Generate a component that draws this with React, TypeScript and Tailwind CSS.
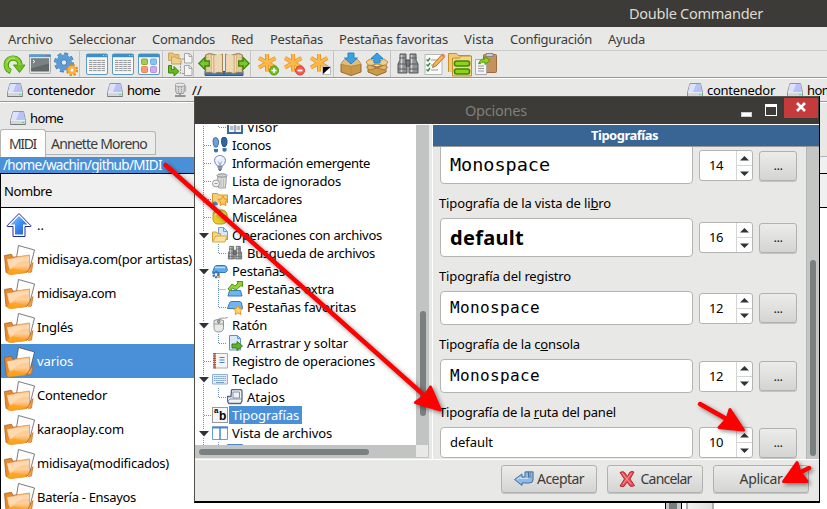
import React, { useLayoutEffect, useRef } from "react";

type Kids = { children?: React.ReactNode };

/* Text run whose tracking is measured so that it fills `w` pixels. */
function T({ w, className = "", children }: Kids & { w: number; className?: string }) {
  const ref = useRef<HTMLSpanElement>(null);
  useLayoutEffect(() => {
    const el = ref.current;
    if (!el) return;
    el.style.letterSpacing = "0px";
    const n = (el.textContent || "").length;
    el.style.letterSpacing = (w - el.getBoundingClientRect().width) / n + "px";
  }, [w]);
  return (
    <span ref={ref} className={"inline-block shrink-0 whitespace-pre " + className}>
      {children}
    </span>
  );
}

function Svg({ s = 24, vb = 24, className = "", children }: Kids & { s?: number; vb?: number; className?: string }) {
  return (
    <svg width={s} height={s} viewBox={`0 0 ${vb} ${vb}`} className={"shrink-0 " + className} fill="none">
      {children}
    </svg>
  );
}

/* ---------- toolbar icons ---------- */
const Refresh = () => (
  <Svg>
    <path d="M8.800 19.500A6.900 6.900 0 1 1 18 12.500" stroke="#4e9a06" strokeWidth="5.400" />
    <path d="M11.500 13h11.500L17.500 20.500z" fill="#73c022" stroke="#4e9a06" strokeLinejoin="round" />
    <path d="M8.300 19.200A6.900 6.900 0 1 1 17.800 13.500" stroke="#86cf35" strokeWidth="3.600" />
    <path d="M5 10.500a6.900 6.900 0 0 1 8-4" stroke="#b5e878" strokeWidth="1.200" />
  </Svg>
);
const Terminal = () => (
  <Svg>
    <rect x="1.5" y="2.5" width="21" height="19" rx="1" fill="#e4e6e5" stroke="#a9adab" />
    <path d="M1 2.500h22v2.500H1z" fill="#4e9fd8" />
    <path d="M18 3.700h1M20.500 3.700h1" stroke="#e33" strokeWidth="1.400" />
    <rect x="3" y="6.500" width="18" height="13" fill="#62676a" />
    <path d="M3 6.500h18v5l-18 5z" fill="#7b8083" />
    <path d="M5 8l1.800 1.500L5 11" stroke="#fff" />
  </Svg>
);
const Gears = () => (
  <Svg>
    <circle cx="10" cy="10.500" r="8.200" stroke="#3b7cb8" strokeWidth="3.600" strokeDasharray="3.7 2.74" />
    <circle cx="10" cy="10.500" r="5.300" stroke="#5c9bd6" strokeWidth="5.400" />
    <circle cx="10" cy="10.500" r="8" stroke="#5c9bd6" strokeWidth="2.600" strokeDasharray="3.2 3.08" />
    <circle cx="10" cy="10.500" r="2.800" fill="#e8e8e7" stroke="#3b7cb8" />
    <circle cx="18" cy="18" r="4.800" stroke="#d98518" strokeWidth="2.600" strokeDasharray="2.1 1.67" />
    <circle cx="18" cy="18" r="3" stroke="#fbb03b" strokeWidth="3.200" />
    <circle cx="18" cy="18" r="1.500" fill="#fff" />
  </Svg>
);
const Grid = () => (
  <Svg>
    <rect x="1.500" y="2" width="21" height="20.500" rx="1.500" fill="#f7f7f7" stroke="#5a9bc8" />
    <path d="M1.500 2h21v3.200h-21z" fill="#3d8fc8" />
    <path d="M18 3.600h1M20.500 3.600h1" stroke="#b9e0fa" />
    <rect x="4" y="7" width="16" height="13" fill="#eef0f1" />
    <path d="M4 8.500h16M4 10.500h16M4 12.500h16M4 14.500h16M4 16.500h16M4 18.500h16" stroke="#9a9ea1" strokeDasharray="3.400 .8" />
  </Svg>
);
const Thumbs = () => (
  <Svg>
    <rect x="1.500" y="2" width="21" height="20.500" rx="1.500" fill="#f7f7f7" stroke="#5a9bc8" />
    <path d="M1.500 2h21v3.200h-21z" fill="#3d8fc8" />
    <rect x="4.500" y="7" width="6" height="5.500" rx="1" fill="#a7c957" stroke="#84a830" />
    <rect x="13.500" y="7" width="6" height="5.500" rx="1" fill="#83c6f2" stroke="#69afe0" />
    <rect x="4.500" y="14.500" width="6" height="6" rx="1" fill="#f79a72" stroke="#e88458" />
    <rect x="13.500" y="14.500" width="6" height="6" rx="1" fill="#cfaaf0" stroke="#b793dd" />
  </Svg>
);
const FlatView = () => (
  <Svg s={26} vb={26}>
    <path d="M1.500 2h4.500l1 1.500h5V9.500H1.500z" fill="#e6c47c" stroke="#c9a65c" />
    <path d="M4.500 6h4.500l1 1.500h4V13H4.500z" fill="#ecd08e" stroke="#c9a65c" />
    <path d="M17 8h-3M13.500 12v10.500h3.500" stroke="#999" strokeDasharray="2 1" />
    <path d="M17.500 2.500h5l2.500 2.500v7h-7.500zM17.500 14.500h5l2.500 2.500v7.500h-7.500z" fill="#f5f5f5" stroke="#a5a5a5" />
    <path d="M22 2.500v3h3M22 14.500v3h3" stroke="#a5a5a5" />
    <path d="M1.500 14.500h3v4h2.500v-3l5 5-5 4.500v-3H1.500z" fill="#66b81e" stroke="#3d8a0a" />
  </Svg>
);
const BookLeft = () => (
  <Svg s={26} vb={26}>
    <path d="M7 20v4.500h19v-4z" fill="#3b78b5" stroke="#285d91" />
    <path d="M7.500 4Q11 1 16 3.500T24.500 3v19q-4-2-8 .5-4-2.500-9-1z" fill="#d9b98a" stroke="#a78352" />
    <path d="M10 4v17M12 4v17M14.500 4.500v17" stroke="#f0dcb6" />
    <path d="M16.500 4.500Q20 2.500 24 3.500V21q-4-1-7.500 1z" fill="#ecd8b4" />
    <path d="M.8 12.500l6-6v3.500h4.500v5H6.800v3.500z" fill="#79c52c" stroke="#3d8a0a" strokeWidth="1.300" />
  </Svg>
);
const BookRight = () => <div className="-scale-x-100"><BookLeft /></div>;
const star = "M11 2v17.500M3 6l16.500 9.500M3 15.500L19.500 6";
const StarBase = ({ children }: Kids) => (
  <Svg>
    <path d={star} stroke="#e58e1a" strokeWidth="4" strokeLinecap="butt" />
    <path d={star} stroke="#fdb74a" strokeWidth="2.600" strokeLinecap="butt" />
    {children}
  </Svg>
);
const StarPlus = () => (
  <StarBase>
    <circle cx="18" cy="18.500" r="4.500" fill="#73c022" stroke="#4e9a06" />
    <path d="M15.500 18.500h5M18 16v5" stroke="#fff" strokeWidth="1.500" />
  </StarBase>
);
const StarMinus = () => (
  <StarBase>
    <circle cx="18" cy="18.500" r="4.500" fill="#ee6052" stroke="#d33a2c" />
    <path d="M15.500 18.500h5" stroke="#fff" strokeWidth="1.800" />
  </StarBase>
);
const StarInvert = () => (
  <StarBase>
    <path d="M14.500 14.500h8v8h-8z" fill="#fff" stroke="#bbb" />
    <path d="M15 15h7.500L15 22z" fill="#000" />
  </StarBase>
);
const Pack = () => (
  <Svg>
    <path d="M2 12l3-4h14l3 4v8l-10 3.500-10-3.500z" fill="#c9994a" stroke="#99692a" />
    <path d="M2 12l10 2 10-2-3-4H5z" fill="#e2bd79" />
    <path d="M2.500 12.500l9.500 2 9.500-2M12 14.500v9" stroke="#b98b3e" />
    <path d="M9 1h6v5h3.500L12 12 5.500 6H9z" fill="#3ea1df" stroke="#2784c6" />
  </Svg>
);
const Unpack = () => (
  <Svg>
    <path d="M3 12l9 3 9-3v8l-9 3.500L3 20z" fill="#cb9b4b" stroke="#99692a" />
    <path d="M1 10l4-3 7 3 7-3 4 3-3 4-8-2-8 2z" fill="#ecce91" stroke="#b98b3e" />
    <path d="M1.500 15l3-2 7.500 3 7.500-3 3 2-3 3-7.500-2-7.500 2z" fill="#e0b568" stroke="#a97a33" />
    <path d="M12 1l6 5.500h-3V11H9V6.500H6z" fill="#3ea1df" stroke="#2784c6" />
  </Svg>
);
const Binoculars = ({ s = 24 }: { s?: number }) => (
  <Svg s={s}>
    <path d="M4 2h6v7l1 2v10H2v-9l2-4zM14 2h6v6l2 4v9h-9V11l1-2z" fill="#8f9294" stroke="#55585a" />
    <path d="M10 8h4v6h-4z" fill="#77797b" stroke="#4a4c4e" />
    <path d="M5.500 3v17M15.500 3v17" stroke="#d2d4d5" strokeWidth="1.600" />
    <path d="M3 6h7M14 6h7M2 12h9M13 12h9M2 17h9M13 17h9" stroke="#5a5c5e" />
  </Svg>
);
const Checklist = () => (
  <Svg>
    <path d="M3 2.500h17v20H3z" fill="#fafafa" stroke="#b8b8b8" />
    <path d="M9 8h7M9 13h6M9 18h7" stroke="#bbb" strokeWidth="1.500" />
    <path d="M4.500 7.500l1.500 1.500 2-3M4.500 12.500L6 14l2-3M4.500 17.500L6 19l2-3" stroke="#2f8f3a" strokeWidth="1.400" />
    <path d="M10.500 15.500l1-3.500L20 2.500l2.500 2.500-8.500 9z" fill="#f8b552" stroke="#b8742c" />
    <path d="M19.500 3L21 1.500 23.500 4 22 5.500z" fill="#e77" />
  </Svg>
);
const SyncFolder = () => (
  <Svg s={26} vb={26}>
    <path d="M1.500 21V2.500h8l1.500 2h12V20" fill="#f3cb74" stroke="#c58f2a" />
    <path d="M5.500 25V7h7l1.500-2h10.500v20z" fill="#f6d48b" stroke="#c58f2a" />
    <rect x="7.500" y="10" width="15" height="5" rx="2" fill="#8ed21c" stroke="#3d8a0a" strokeWidth="1.600" />
    <rect x="7.500" y="18" width="15" height="5" rx="2" fill="#8ed21c" stroke="#3d8a0a" strokeWidth="1.600" />
  </Svg>
);
const Paste = () => (
  <Svg>
    <rect x="9.500" y="2.500" width="13" height="18" rx="1" fill="#c4935d" stroke="#9a6c3a" />
    <path d="M12 1.500h7v3h-7z" fill="#ccc" stroke="#888" />
    <path d="M1.500 7.500h11v15h-11z" fill="#f4f4f4" stroke="#aaa" />
    <path d="M4 11.500h3M4 14h6M4 16.500h6M4 19h6" stroke="#999" />
    <path d="M5 12q0-5 6-5V4.500l5 4-5 4V10Q7 9.500 5 12z" fill="#8ed21c" stroke="#4e9a06" />
  </Svg>
);

/* ---------- drives, folders ---------- */
const Drive = () => (
  <Svg s={16} vb={16}>
    <path d="M3 1.500h10.500l2 9v4H.5v-4z" fill="#e9ebf2" stroke="#92949c" />
    <path d="M3 2h10.300l1.700 8H1.200z" fill="#b9c2f5" />
    <path d="M3.200 2h6L6 10H1.200z" fill="#dde2fc" />
    <path d="M1 11h14v3H1z" fill="#d5d6d8" />
    <path d="M12 12.500h2" stroke="#4d8" />
    <path d="M.5 14.500h15" stroke="#77797d" />
  </Svg>
);
const NetDrive = () => (
  <Svg s={16} vb={16}>
    <path d="M2.500 2.500h9v3q0 4-1 6h-7q-1-2-1-6z" fill="#d4d5d6" stroke="#9b9d9f" />
    <ellipse cx="7" cy="2.800" rx="5" ry="1.600" fill="#eee" stroke="#a5a5a5" />
    <path d="M5.500 4.500v6M8.500 4.500v6" stroke="#9a9c9e" strokeDasharray="1.500 .8" />
    <path d="M7 11v3M2 14h10.500" stroke="#909294" strokeWidth="1.800" />
    <path d="M12.500 3.500v6" stroke="#b5b5b5" strokeWidth="1.500" />
  </Svg>
);
const UpArrow = () => (
  <Svg s={26} vb={26}>
    <path d="M13 1.500L25 13.800q.3.700-.5.700H19V24.500H7V14.500H1.500q-.8 0-.5-.7z" fill="#fff" stroke="#242a9c" strokeLinejoin="round" />
    <path d="M13 4L21.500 12.500H17V22.500H9V12.500H4.500z" fill="url(#upg)" />
    <defs>
      <linearGradient id="upg" x1="0" y1="0" x2="1" y2="1">
        <stop stopColor="#8fd0fb" /><stop offset=".5" stopColor="#3d8df0" /><stop offset="1" stopColor="#1f56c9" />
      </linearGradient>
    </defs>
  </Svg>
);
const Folder = () => (
  <Svg s={32} vb={32}>
    <defs>
      <linearGradient id="fg" x1="0" y1="0" x2="0" y2="1">
        <stop stopColor="#fbc48a" /><stop offset=".55" stopColor="#fdcf9b" /><stop offset="1" stopColor="#f98f12" />
      </linearGradient>
    </defs>
    <path d="M1.500 12.500l7-1.200 1.500 3 15-2 2 8-3 9-16 2-5-2z" fill="#e98a2c" stroke="#a8560f" strokeWidth=".7" />
    <path d="M15.500 2.500l16 4.500-5 20-14.500-3.500z" fill="#fff" stroke="#444" strokeWidth=".7" />
    <path d="M3.500 15.800L11 14.800l1.500-.8 14-2 .2 13.500-2 3-18 2.500z" fill="url(#fg)" stroke="#d07a22" strokeWidth=".6" />
    <path d="M4.500 16.500l21.500-3v4q-13 0-18.500 10z" fill="#ffe3c4" opacity=".6" />
    <path d="M24.500 28.500l5.500-9-1.500 9.500-3 .5z" fill="#f9a13e" stroke="#b85e10" strokeWidth=".6" />
    <path d="M4 30.500q1-5.500 7-5t13 3.500l-3 1.500-15 1.500z" fill="#ffa51b" opacity=".85" />
  </Svg>
);

/* ---------- option tree icons ---------- */
const I = ({ children }: Kids) => <Svg s={16} vb={16}>{children}</Svg>;
const icons: Record<string, React.ReactNode> = {
  visor: <I><path d="M0 2h16v13H0z" fill="#35689f" /><path d="M2 3h5.500v10H2zM8.500 3H14v10H8.500z" fill="#f2f2f2" /><path d="M3 8h3.500M3 10h3.500M9.500 8H13M9.500 10H13" stroke="#888" /></I>,
  feet: <I><path d="M1 4Q1 .5 3.500.5T6.500 4 5 10H2.500Q1 7 1 4z" fill="#6f9fd4" stroke="#3f72b0" /><path d="M9.500 3.500Q9.500 0 12 0t3 3.500-1.500 6H11q-1.500-2-1.500-6z" fill="#3264a8" stroke="#234d88" /><path d="M2 12h4v2.500q-2 2-4 0zM10.500 11h4v3q-2 1.500-4 0z" fill="#3c70b4" /></I>,
  bulb: <I><path d="M5.500 11Q2.500 8.500 2.500 5.500a5.500 5 0 0 1 11 0Q13.500 8.500 10.500 11z" fill="#e9f0ff" stroke="#7885a8" /><path d="M5 4q1.500-2.500 4-1.500" stroke="#fff" strokeWidth="2" /><path d="M6.500 6.500l1.500 4 1.500-4" stroke="#9ab" /><path d="M5.500 12h5M6 14h4M7 15.500h2" stroke="#67748d" strokeWidth="1.300" /></I>,
  trash: <I><path d="M5.500 3h9l-1 12h-7z" fill="#d9dad9" stroke="#a0a3a2" /><ellipse cx="10" cy="2.500" rx="5" ry="1.700" fill="#cfd1d0" stroke="#8a8d8b" /><circle cx="4" cy="10.500" r="3.500" fill="#eee" stroke="#999" /><path d="M2.500 10.500h3" stroke="#999" /><path d="M9 6v8M11.500 6v8" stroke="#bbb" /></I>,
  marks: <I><path d="M.5 13V2.500h5l1 1.500h9v8" fill="#f8d07a" stroke="#d09a30" /><path d="M11 5l1.500 3 3 .5-2 2.500.5 3.500-3-1.500-3 1.500.5-3.500L6 8.500 9.500 8z" fill="#ffc659" stroke="#e28f28" /><path d="M1 11q4-2 5 3l-5 1z" fill="#4a87c6" /></I>,
  misc: <I><rect x="1" y="1" width="14" height="14" rx="5" fill="#e8ce2d" stroke="#b59d15" /><path d="M3 6q5-5 10 0" stroke="#fff3a5" strokeWidth="2" /></I>,
  ops: <I><path d="M6.500.5h5l4 4v8h-9z" fill="#d8e7fa" stroke="#6d9dd8" /><path d="M11.500.5v4h4" stroke="#6d9dd8" /><path d="M.5 14V5h4l1 1.500h3V10" fill="#f7d583" stroke="#cf9c34" /><path d="M.5 15l3-6H15l-2 6z" fill="#fce2a0" stroke="#d9a63f" /></I>,
  binoc: <Binoculars s={16} />,
  tabs: <I><path d="M.5 9.500L2.500 4Q3 2.500 5 2.500h7q2 0 2.500 1.500l1 3.500-2 2z" fill="#62a9e8" stroke="#3678bb" /><path d="M3 4.500h10" stroke="#b5dcfa" strokeWidth="1.500" /><circle cx="4" cy="11.500" r="2.500" stroke="#3a75b5" strokeWidth="2.500" strokeDasharray="2 .7" /><circle cx="7" cy="14" r="1.300" fill="#f0a030" /></I>,
  extra: <I><path d="M1 15l1.500-5.500h11L15 15z" fill="#72b5ee" stroke="#3678bb" /><path d="M1 8l4-5 3 2 3-3-1-1.500h5.500V5.500L14 4.500 9 9 5.500 7 3 10z" fill="#94d13d" stroke="#4e9a06" /></I>,
  fav: <I><path d="M.5 9.500L2.500 4Q3 2.500 5 2.500h7q2 0 2.500 1.500l1 5.500z" fill="#72b5ee" stroke="#3678bb" /><path d="M11 6.500l1.400 3 3.100.5-2.200 2.200.6 3.300-2.900-1.500-2.900 1.500.6-3.300L6.500 10l3-.5z" fill="#ffd66b" stroke="#e69a28" /></I>,
  mouse: <I><path d="M2 3.500Q6.500 1 11.500 3.500v7q0 4.500-4.800 4.500T2 10.500z" fill="#e9e9e8" stroke="#8f9291" /><path d="M2.500 7h8.500M6.700 3v4" stroke="#999" /><path d="M6.700 4q0-3.500 3-3t6-.5" stroke="#999" /><circle cx="6.700" cy="4.500" r="1.300" fill="#bbb" stroke="#777" /></I>,
  drag: <I><path d="M2.500.5h8l3 3v11.500h-11z" fill="#d7e9fb" stroke="#5e93ce" /><path d="M10.500.5v3h3" stroke="#5e93ce" /><path d="M5 9h5V6.500l5.500 4.500-5.500 4.500V13H5z" fill="#62b12b" stroke="#3a7d12" /></I>,
  log: <I><path d="M2.500.5h13v14.500h-13z" fill="#f5f5f5" stroke="#aaa" /><path d="M2.500 0v16" stroke="#a55a3e" strokeWidth="3" strokeDasharray="1.500 .7" /><path d="M7.500 4.500h5M7.500 7h5M7.500 9.500h5" stroke="#4a84c8" strokeWidth="1.200" /></I>,
  keyb: <I><path d="M.5 3.500h15v9.500H.5z" fill="#e4eefa" stroke="#8db0d8" /><path d="M2 5.500h12M2 7.500h12M2 9.500h12" stroke="#79a0cc" strokeDasharray="1.500 .6" /><path d="M4 11.500h8" stroke="#79a0cc" /></I>,
  keys: <I><path d="M4.500 1.500Q4.500.5 6 .5h7q2 0 2 2V12l-1.500 2.500H2l-1.500-2V7.500H4z" fill="#f0f1f3" stroke="#54658a" strokeWidth="1.300" /><path d="M6 3h6.500v6H6zM.5 12.500L3 10h12" stroke="#8492ad" /></I>,
  fonts: <div className="relative h-4 w-4 shrink-0 border border-[#999] bg-[#f6f6f6] font-['Liberation_Sans',sans-serif] font-bold text-black"><span className="absolute left-px top-[-2px] text-[8px] leading-[10px]">a</span><span className="absolute left-[6px] top-[2px] text-[12px] leading-[13px]">b</span></div>,
  view: <I><path d="M.5 2h15v12.500H.5z" fill="#fff" stroke="#6d9dd8" /><path d="M0 2.500h16" stroke="#4a86cc" strokeWidth="2" /><path d="M8 2v12.500" stroke="#4a86cc" strokeWidth="1.500" /></I>,
  next: <I><path d="M.5 1.500h15v12.500H.5z" fill="#c8dcf2" stroke="#4a86cc" /></I>,
};

type Node = { t: string; w: number; i: string; sub?: boolean; open?: boolean; sel?: boolean };
const nodes: Node[] = [
  { t: "Visor", w: 31, i: "visor", sub: true },
  { t: "Iconos", w: 39, i: "feet" },
  { t: "Información emergente", w: 138, i: "bulb" },
  { t: "Lista de ignorados", w: 109, i: "trash" },
  { t: "Marcadores", w: 70, i: "marks" },
  { t: "Miscelánea", w: 65, i: "misc" },
  { t: "Operaciones con archivos", w: 150, i: "ops", open: true },
  { t: "Búsqueda de archivos", w: 128, i: "binoc", sub: true },
  { t: "Pestañas", w: 53, i: "tabs", open: true },
  { t: "Pestañas extra", w: 87, i: "extra", sub: true },
  { t: "Pestañas favoritas", w: 109, i: "fav", sub: true },
  { t: "Ratón", w: 35, i: "mouse", open: true },
  { t: "Arrastrar y soltar", w: 101, i: "drag", sub: true },
  { t: "Registro de operaciones", w: 143, i: "log" },
  { t: "Teclado", w: 46, i: "keyb", open: true },
  { t: "Atajos", w: 38, i: "keys", sub: true },
  { t: "Tipografías", w: 67, i: "fonts", sel: true },
  { t: "Vista de archivos", w: 100, i: "view", open: true },
  { t: "", w: 0, i: "next", sub: true },
];

function TreeRow({ n }: { n: Node }) {
  return (
    <div className="flex h-[18px] shrink-0 items-center">
      <div className="flex h-full w-[17px] shrink-0 items-center justify-end">
        {n.open ? (
          <svg width="17" height="18"><path d="M8.500 0v5M8.500 14v4" stroke="#6d8fb8" strokeDasharray="1 1" /><path d="M4 7h10l-5 5.500z" fill="#2e3436" /></svg>
        ) : (
          <svg width="17" height="18"><path d="M8.500 0v18" stroke="#6d8fb8" strokeDasharray="1 1" />{!n.sub && <path d="M9 9.500h7" stroke="#6d8fb8" strokeDasharray="1 1" />}</svg>
        )}
      </div>
      {n.sub && (
        <svg width="15" height="18" className="shrink-0"><path d={n.i === "extra" ? "M6.500 0v18M6.500 9.500h8" : "M6.500 0v9.500h8"} stroke="#6d8fb8" strokeDasharray="1 1" fill="none" /></svg>
      )}
      {icons[n.i]}
      <div className={"ml-px flex h-[18px] items-center px-[3px] " + (n.sel ? "bg-[#4a90d9] text-white" : "")}>
        {n.t && <T w={n.w}>{n.t}</T>}
      </div>
    </div>
  );
}

const Spin = ({ v }: { v: string }) => (
  <div className="flex h-[31px] w-[54px] shrink-0 rounded-[3px] border border-[#b4b5b3] bg-white">
    <div className="flex flex-1 items-center pb-px pl-[9px]"><T w={14}>{v}</T></div>
    <div className="flex w-[16px] flex-col border-l border-[#d5d5d3]">
      <div className="flex flex-1 items-center justify-center border-b border-[#d5d5d3]"><svg width="9" height="5"><path d="M0 4.500L4.500 0 9 4.500z" fill="#2e3436" /></svg></div>
      <div className="flex flex-1 items-center justify-center"><svg width="9" height="5"><path d="M0 .5h9L4.500 5z" fill="#2e3436" /></svg></div>
    </div>
  </div>
);

const btn = "flex items-center justify-center rounded-[3px] border border-[#b1b2b0] bg-linear-to-b from-[#ececeb] to-[#d4d4d2] shadow-[0_1px_0_#c4c4c2]";

function FontRow({ v, children, h }: Kids & { v: string; h: string }) {
  return (
    <div className={"flex shrink-0 items-center " + h}>
      <div className={"flex w-[253px] shrink-0 items-center rounded-[4px] border border-[#b4b5b3] bg-white pl-[9px] " + h}>{children}</div>
      <div className="ml-[6px]"><Spin v={v} /></div>
      <div className={btn + " ml-[6px] h-[30px] w-[38px]"}><T w={9} className="pb-px text-[#222]">...</T></div>
    </div>
  );
}

const FieldLabel = ({ w, h, children }: Kids & { w: number; h: string }) => (
  <div className={"-ml-px flex shrink-0 items-center pt-[4px] " + h}><T w={w}>{children}</T></div>
);

const mono = "font-['DejaVu_Sans_Mono',monospace]";

function OptionsDialog() {
  return (
    <div className="absolute left-[194px] top-[96px] flex h-[407px] w-[626px] flex-col border-r border-b-2 border-l border-black border-l-[#4f5049] bg-[#e8e8e7]">
      <div className="flex h-[28px] shrink-0 items-start border-t border-[#55564f] bg-[#3c3b37]">
        <div className="flex flex-1 pl-[270px] pt-[2px] text-[14.500px] leading-[22px] text-[#807f7a]"><T w={62}>Opciones</T></div>
        <div className="mr-[13px] mt-[15px] h-[5px] w-[11px] border border-[#ccc] bg-white" />
        <div className="mr-[7px] mt-[7px] h-[12px] w-[12px] border border-t-[3px] border-white bg-[#3c3b37]" />
        <div className="mt-[1px] mr-px flex h-[20px] w-[34px] items-center justify-center bg-[#c33c3b]">
          <svg width="10" height="10" className="mb-[2px]"><path d="M1 1l8 8M9 1l-8 8" stroke="#fff" strokeWidth="2.600" /></svg>
        </div>
      </div>
      <div className="flex h-[335px] shrink-0 border-t border-white">
        <div className="flex w-[234px] flex-col">
          <div className="flex h-[320px]">
            <div className="flex w-[221px] flex-col overflow-hidden bg-white">
              <div className="-mt-[7px] flex flex-col">{nodes.map((n, k) => <TreeRow key={k} n={n} />)}</div>
            </div>
            <div className="w-[13px] bg-[#c2c4c3] pl-[4px] pt-[186px]"><div className="h-[105px] w-[6px] rounded-full bg-[#7a7f80]" /></div>
          </div>
          <div className="flex h-[13px]">
            <div className="w-[221px] bg-[#c2c4c3] pl-[4px] pt-[4px]"><div className="h-[6px] w-[170px] rounded-full bg-[#7a7f80]" /></div>
            <div className="flex-1 border-r border-b border-[#c2c4c3]" />
          </div>
        </div>
        <div className="ml-[3px] flex flex-1 flex-col border-l border-white">
          <div className="flex h-[22px] shrink-0 items-center justify-center border-b border-[#999] bg-[#386594] pr-[3px] pb-px font-bold text-white"><T w={67}>Tipografías</T></div>
          <div className="flex h-[312px]">
            <div className="flex flex-1 flex-col overflow-hidden pl-[7px]">
              <div className="-mt-[13px] flex flex-col">
                <div className="flex h-[50px] shrink-0 items-center">
                  <div className="flex h-[50px] w-[253px] items-end rounded-[4px] border border-[#b4b5b3] bg-white pb-[5px] pl-[9px]"><T w={100} className={mono + " text-[18.500px] leading-[26px]"}>Monospace</T></div>
                  <div className="ml-[6px] mt-[13px]"><Spin v="14" /></div>
                  <div className={btn + " ml-[6px] mt-[13px] h-[30px] w-[38px]"}><T w={9} className="pb-px text-[#222]">...</T></div>
                </div>
                <FieldLabel w={172} h="h-[34px]">Tipografía de la vista de li<u>b</u>ro</FieldLabel>
                <FontRow v="16" h="h-[39px]"><T w={74} className="text-[20px] font-bold">default</T></FontRow>
                <FieldLabel w={132} h="h-[34px]">Tipografía del re<u>g</u>istro</FieldLabel>
                <FontRow v="12" h="h-[34px]"><T w={90} className={mono + " text-[16px]"}>Monospace</T></FontRow>
                <FieldLabel w={141} h="h-[34px]">Tipografía de la c<u>o</u>nsola</FieldLabel>
                <FontRow v="12" h="h-[34px]"><T w={90} className={mono + " text-[16px]"}>Monospace</T></FontRow>
                <FieldLabel w={177} h="h-[34px]">Tipografía de la <u>r</u>uta del panel</FieldLabel>
                <FontRow v="10" h="h-[31px]"><T w={43} className="pb-px">default</T></FontRow>
              </div>
            </div>
            <div className="w-[13px] border-l border-[#b5b7b6] bg-[#c4c6c5] pl-[3px] pt-[113px]"><div className="h-[196px] w-[6px] rounded-full bg-[#7a7f80]" /></div>
          </div>
        </div>
      </div>
      <div className="flex flex-1 items-start justify-end gap-[10px] border-t border-white pr-[10px] pt-[5px] text-[14px] text-[#3c3b37]">
        <div className={btn + " h-[28px] w-[96px] gap-[3px]"}>
          <Svg s={20} vb={20}><path d="M.5 10.500L8 5v3h3V3h3.500v5H16V3h3v8q0 3-4 3H8v2.500z" fill="#8fb9e6" stroke="#41709f" /><path d="M11 2.500h8V8h-3V3" stroke="#7d94b0" /><path d="M3 10.500l3.500-2.500v1.500h8" stroke="#cfe2f6" /></Svg>
          <T w={47}>Aceptar</T>
        </div>
        <div className={btn + " h-[28px] w-[96px] gap-[6px]"}>
          <Svg s={16} vb={16}><path d="M1 1.500Q4-.5 6 2l2.500 3.500L11 1q2-1 4 0l-4 7 4.500 6.500q-2.500 1.500-4.500.5l-3-4-3 4.500q-2 .5-4-.5l4.500-7z" fill="#e9525a" stroke="#b52932" /><path d="M3 2l9 11M12.500 2L4 13" stroke="#f79095" /></Svg>
          <T w={51}>Cancelar</T>
        </div>
        <div className={btn + " h-[28px] w-[96px]"}><T w={43}>Aplicar</T></div>
      </div>
    </div>
  );
}

const menu: [string, number, string][] = [
  ["Archivo", 45, "ml-[8px]"], ["Seleccionar", 67, "ml-[16px]"], ["Comandos", 63, "ml-[16px]"], ["Red", 22, "ml-[16px]"],
  ["Pestañas", 53, "ml-[17px]"], ["Pestañas favoritas", 109, "ml-[16px]"], ["Vista", 30, "ml-[16px]"],
  ["Configuración", 82, "ml-[16px]"], ["Ayuda", 37, "ml-[16px]"],
];
const files: [string, number][] = [
  ["midisaya.com(por artistas)", 155], ["midisaya.com", 79], ["Inglés", 36], ["varios", 36], ["Contenedor", 70],
  ["karaoplay.com", 87], ["midisaya(modificados)", 132], ["Batería - Ensayos", 99],
];
const Slot = ({ children }: Kids) => <div className="flex w-[26px] shrink-0 items-center justify-center">{children}</div>;
const Sep = () => <div className="w-px shrink-0 bg-[#c4c4c3]" />;

export default function App() {
  return (
    <div className="relative flex h-[509px] w-[827px] flex-col overflow-hidden bg-[#e8e8e7] font-['Noto_Sans',sans-serif] text-[13px] leading-[18px] text-black">
      <div className="flex h-[27px] shrink-0 items-center bg-[#3c3b37] pb-[2px] pl-[629px] text-[14.500px] text-[#dfdbd2]"><T w={134}>Double Commander</T></div>
      <div className="flex h-[24px] shrink-0 items-center border-b border-[#cbcbca] pt-[1px] text-[#3c3b37]">
        {menu.map(([t, w, m]) => <div key={t} className={m}><T w={w}>{t}</T></div>)}
      </div>
      <div className="flex h-[27px] shrink-0 border-b border-[#979797] pl-px">
        <Slot><Refresh /></Slot><Slot><Terminal /></Slot><Slot><Gears /></Slot><Sep />
        <div className="flex pl-1"><Slot><Grid /></Slot><Slot><Grid /></Slot><Slot><Thumbs /></Slot></div><Sep />
        <div className="flex w-[30px] items-center pl-[4px]"><FlatView /></div><Sep />
        <div className="flex pl-1"><Slot><BookLeft /></Slot><Slot><BookRight /></Slot></div><Sep />
        <div className="flex pl-1"><Slot><StarPlus /></Slot><Slot><StarMinus /></Slot><Slot><StarInvert /></Slot></div><Sep />
        <div className="flex pl-1"><Slot><Pack /></Slot><Slot><Unpack /></Slot></div><Sep />
        <div className="flex pl-1"><Slot><Binoculars /></Slot><Slot><Checklist /></Slot><Slot><SyncFolder /></Slot><Slot><Paste /></Slot></div>
      </div>
      <div className="flex h-[24px] shrink-0 items-center border-t border-b border-t-white border-b-[#979797] pl-[7px]">
        <Drive /><T w={68} className="ml-[4px]">contenedor</T>
        <div className="ml-[12px]"><Drive /></div><T w={33} className="ml-[4px]">home</T>
        <div className="ml-[13px]"><NetDrive /></div><T w={10} className="ml-[3px]">//</T>
        <div className="ml-[485px]"><Drive /></div><T w={68} className="ml-[4px]">contenedor</T>
        <div className="ml-[12px]"><Drive /></div><T w={33} className="ml-[4px]">home</T>
      </div>
      <div className="flex flex-1">
        <div className="flex w-[665px] flex-col">
          <div className="flex h-[27px] shrink-0 items-center border-t border-white pl-[10px] pt-[4px]"><Drive /><T w={33} className="ml-[4px]">home</T></div>
          <div className="flex h-[28px] shrink-0 text-[14px] text-[#3c3b37]">
            <div className="flex w-[46px] items-center justify-center rounded-t-[3px] border border-b-0 border-[#b4b5b3] bg-white pr-px"><T w={27}>MIDI</T></div>
            <div className="mt-[2px] mb-[2px] flex w-[110px] items-center rounded-tr-[3px] border border-l-0 border-[#b4b5b3] bg-[#ececeb] pt-[2px] pl-[5px]"><T w={96}>Annette Moreno</T></div>
          </div>
          <div className="flex h-[16px] shrink-0 items-center bg-[#4a90d9] pl-[3px] text-[13.500px] leading-[16px] text-white"><T w={159}>/home/wachin/github/MIDI</T></div>
          <div className="flex flex-1 flex-col border-t border-l border-black bg-white">
            <div className="flex h-[34px] shrink-0 items-center border-b border-black bg-[#f0f0f0] pl-[3px]"><T w={48}>Nombre</T></div>
            <div className="flex h-[34px] shrink-0 items-center pl-[5px]"><UpArrow /><T w={7} className="ml-[5px]">..</T></div>
            {files.map(([t, w]) => (
              <div key={t} className={"flex h-[34px] shrink-0 items-center pl-[2px] " + (t === "varios" ? "bg-[#4a90d9] text-white" : "")}>
                <Folder /><T w={w} className="ml-[2px]">{t}</T>
              </div>
            ))}
          </div>
        </div>
        <div className="flex w-[17px] border-l border-black bg-[#c8c8c8] pl-[3px]"><div className="mr-[4px] w-[8px] bg-[#777c7c]" /><div className="flex-1 border-l border-black bg-white" /></div>
        <div className="flex flex-1 flex-col">
          <div className="h-[54px] shrink-0 border-t border-white" />
          <div className="h-[17px] shrink-0 border-t border-[#b4b5b3] bg-[#f0f0f0]" />
          <div className="h-[35px] shrink-0 border-t border-b border-black bg-[#f0f0f0]" />
          <div className="flex flex-1 items-end bg-white pl-[4px]"><div className="h-[20px] w-[28px] border-r-2 border-l-2 border-[#b1b2b0] bg-linear-to-r from-[#f1f1f0] to-[#dededd]" /></div>
        </div>
      </div>
      <OptionsDialog />
      <svg className="absolute left-0 top-0 drop-shadow-[2px_2px_2px_rgba(0,0,0,0.450)]" width="827" height="509">
        <g stroke="#f00" strokeLinecap="round" fill="none">
          <path d="M165.500 165L426 397" strokeWidth="4.500" />
          <path d="M700 404l30 17" strokeWidth="4.500" />
          <path d="M809 468l-14 7" strokeWidth="4.500" />
        </g>
        <g fill="#f00" stroke="#f00" strokeWidth="3" strokeLinejoin="round">
          <path d="M440.500 410L430.500 387 425 395.500 415.500 402.500z" />
          <path d="M743.500 430L730 409.500 727 419 719 427.500z" />
          <path d="M783.500 481.500L797 462.500 800 472 807 481.500z" />
        </g>
      </svg>
    </div>
  );
}
